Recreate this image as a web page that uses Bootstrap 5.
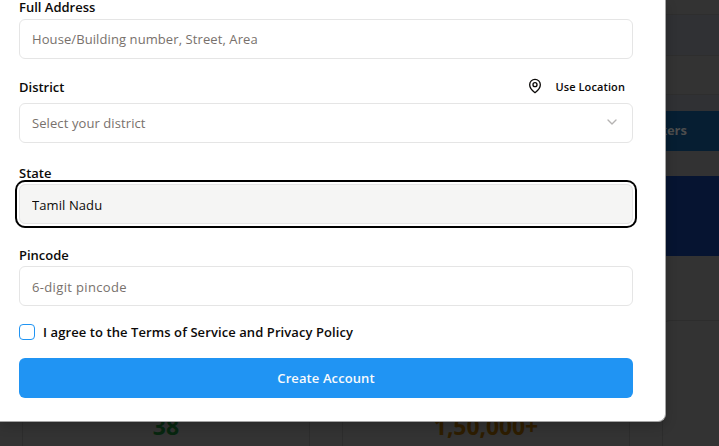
<!DOCTYPE html>
<html lang="en">
<head>
<meta charset="utf-8">
<meta name="viewport" content="width=device-width, initial-scale=1">
<title>Create Account</title>
<link href="https://cdn.jsdelivr.net/npm/bootstrap@5.3.0/dist/css/bootstrap.min.css" rel="stylesheet">
<style>
body{font-family:"Open Sans","Noto Sans",sans-serif;background:#333;color:#0c0a09;width:719px;height:446px}
.page-back{height:446px;background:#333}
.band{border-bottom:1px solid #2e2e2e}
.band-a{height:15px}.band-b{height:41px;background:#303134}.band-c{height:39px}.band-d{height:16px;background:#303134}
.browse-btn{height:40px;background:#061e32;color:#4d4d4d;font-size:13px;font-weight:700;padding-right:32px}
.gap-strip{height:25px;background:#323233}
.hero-strip{height:80px;background:#061431}
.stats{margin:64px 0 0 22px;gap:32px}
.stat{width:288px;height:160px;border:1px solid #2d2d2d;border-radius:8px;font-size:23px;font-weight:700;line-height:24px;padding-top:93px}
.stat-g{color:#07260f}.stat-y{color:#2e1d00;letter-spacing:-.1px}
.sheet{width:666px;height:422px;background:#fff;border:solid #a4a4a4;border-width:0 1px 1px 0;border-radius:0 0 8px 0;padding:0 32px 0 19px;box-shadow:0 4px 12px rgba(0,0,0,.2)}
.lbl{font-size:13px;font-weight:600;line-height:14px;white-space:nowrap}
.sheet .form-control,.pick{height:40px;border:1px solid #e5e5e5;border-radius:6px;padding:0 12px;font-size:13px;line-height:38px;color:#0c0a09;background:#fff;box-shadow:none;letter-spacing:.09px}
.sheet .form-control::placeholder,.pick{color:#78716c;opacity:1}
.sheet .state-input{background:#f5f5f4;box-shadow:0 0 0 2px #fff,0 0 0 4px #000}
.sheet .state-input,.sheet .pin-input{padding-top:2px}
.sheet .pin-input{letter-spacing:.35px}
.g1{margin-top:5px}.g2{margin-top:20px}.g3{margin-top:23px}.g4{margin-top:4px}.g5{margin-top:24px}
.g6{margin-top:8px}
.loc-row{height:16px}
.loc{font-size:11px;font-weight:600;line-height:16px;gap:12px;padding-right:8px;letter-spacing:.1px}
.loc svg{margin-top:-2px}
.pick svg{margin-top:-2px}
.sheet .form-check-input{width:16px;height:16px;border:1px solid #2094f3;border-radius:4px;margin:0}
.agree{margin-top:18px;height:16px;gap:8px}
.agree .lbl{letter-spacing:.085px}
.create{margin-top:18px;height:40px;background:#2094f3;color:#f8fafc;border:0;border-radius:6px;font-size:13px;font-weight:600;padding:1px 0 0;letter-spacing:.1px}
</style>
<script src="https://cdn.jsdelivr.net/npm/bootstrap@5.3.0/dist/js/bootstrap.bundle.min.js"></script>
</head>
<body class="overflow-hidden position-relative">
<div class="page-back overflow-hidden" aria-hidden="true">
  <div class="band band-a"></div><div class="band band-b"></div><div class="band band-c"></div><div class="band-d"></div>
  <div class="browse-btn d-flex align-items-center justify-content-end">Workers</div>
  <div class="gap-strip"></div><div class="hero-strip"></div>
  <div class="stats d-flex">
    <div class="stat stat-g flex-shrink-0 text-center">38</div>
    <div class="stat stat-y flex-shrink-0 text-center">1,50,000+</div>
    <div class="stat flex-shrink-0"></div>
  </div>
</div>
<form class="sheet position-absolute top-0 start-0">
  <label class="lbl d-block" for="addr">Full Address</label>
  <input class="form-control g1" id="addr" placeholder="House/Building number, Street, Area">
  <div class="loc-row g2 d-flex align-items-center justify-content-between">
    <span class="lbl">District</span>
    <span class="loc d-flex align-items-center">
      <svg width="16" height="16" viewBox="0 0 24 24" fill="none" stroke="currentColor" stroke-width="2" stroke-linecap="round" stroke-linejoin="round"><path d="M20 10c0 6-8 12-8 12s-8-6-8-12a8 8 0 0 1 16 0Z"/><circle cx="12" cy="10" r="3"/></svg>
      <span>Use Location</span>
    </span>
  </div>
  <div class="pick g6 d-flex align-items-center justify-content-between">
    <span>Select your district</span>
    <svg width="16" height="16" viewBox="0 0 24 24" fill="none" stroke="#b5b3b2" stroke-width="2" stroke-linecap="round" stroke-linejoin="round"><path d="m6 9 6 6 6-6"/></svg>
  </div>
  <label class="lbl d-block g3" for="state">State</label>
  <input class="form-control g4 state-input" id="state" value="Tamil Nadu" readonly>
  <label class="lbl d-block g5" for="pin">Pincode</label>
  <input class="form-control g4 pin-input" id="pin" placeholder="6-digit pincode">
  <div class="agree d-flex align-items-center">
    <input class="form-check-input" type="checkbox" id="agree">
    <label class="lbl" for="agree">I agree to the Terms of Service and Privacy Policy</label>
  </div>
  <button class="btn create w-100 d-block" type="button">Create Account</button>
</form>
</body>
</html>
